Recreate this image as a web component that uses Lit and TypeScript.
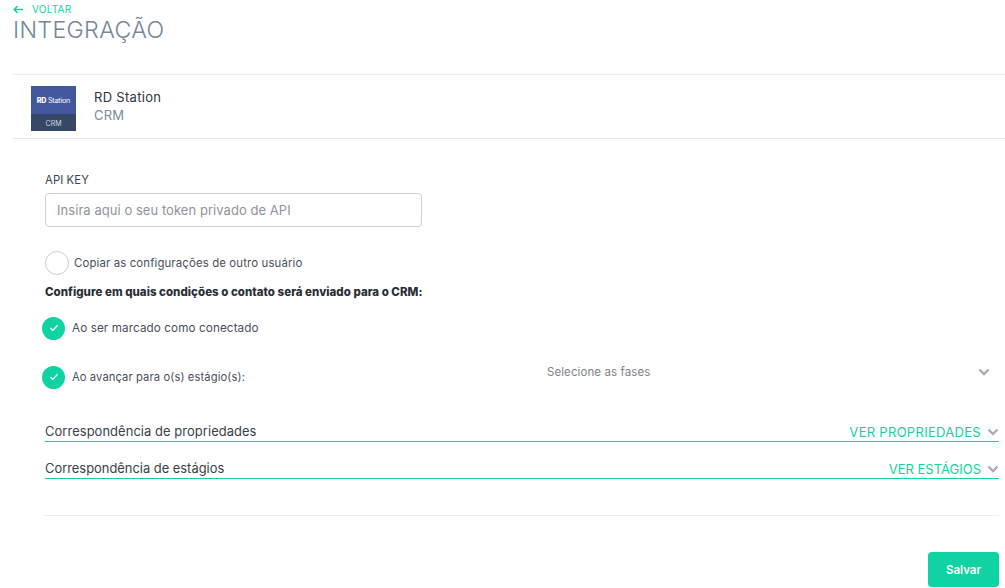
import { LitElement, html, css, svg } from "lit";
import { customElement } from "lit/decorators.js";

const chevron = svg`<svg class="chev" viewBox="0 0 12 8" width="12" height="8"><path d="M1.5 1.5 6 6l4.5-4.5" fill="none" stroke="#a9adb8" stroke-width="2.4"/></svg>`;
const check = html`<svg viewBox="0 0 12 10" width="10" height="8"><path d="M1.5 5 4.5 8 10.5 1.5" fill="none" stroke="#fff" stroke-width="1.6"/></svg>`;

@customElement("app-root")
export class AppRoot extends LitElement {
  static styles = css`
    :host { display: block; width: 1005px; height: 588px; overflow: hidden; background: #fff; font-family: Inter, "Liberation Sans", sans-serif; color: #3a3f4a; box-sizing: border-box; }
    .page { display: flex; flex-direction: column; height: 588px; padding: 4px 0 0 13px; box-sizing: border-box; }
    .back { display: flex; align-items: center; gap: 8px; height: 11px; color: #0fd3a2; font-size: 10px; line-height: 11px; letter-spacing: .25px; }
    h1 { margin: 0; height: 59px; font-size: 23.2px; font-weight: 300; line-height: 30px; color: #74879a; letter-spacing: .33px; }
    .app { display: flex; align-items: flex-start; gap: 18px; padding: 11px 0 0 18px; height: 52px; border-top: 1px solid #ececec; border-bottom: 1px solid #e6e6e6; }
    .logo { width: 45px; height: 45px; display: flex; flex-direction: column; color: #fff; flex: none; }
    .logo-top { height: 28px; background: #43589c; display: flex; align-items: center; justify-content: center; font-size: 7.2px; letter-spacing: -.2px; white-space: nowrap; }
    .logo-top b { font-weight: 800; margin-right: 1.5px; }
    .logo-bot { height: 17px; background: #364766; display: flex; align-items: center; justify-content: center; font-size: 7px; color: #d5d9e2; padding-top: 1px; box-sizing: border-box; }
    .app-text { margin-top: 2px; }
    .app-name { font-size: 13px; line-height: 18px; color: #30343c; letter-spacing: .3px; }
    .app-type { font-size: 13px; line-height: 18px; color: #7b8c9e; letter-spacing: .2px; }
    .form { display: flex; flex-direction: column; padding: 35px 6px 0 32px; flex: 1; }
    .label { font-size: 11.3px; line-height: 13px; color: #3a3f4a; letter-spacing: .1px; }
    .input { margin-top: 6px; width: 377px; height: 34px; box-sizing: border-box; border: 1px solid #cfd2d6; border-radius: 4px; padding-left: 11px; font-size: 13px; line-height: 32px; color: #8f949c; letter-spacing: .05px; }
    .copy { display: flex; align-items: center; gap: 5px; margin-top: 24px; height: 24px; font-size: 11.4px; color: #4a4f5a; letter-spacing: .13px; }
    .radio { width: 22px; height: 22px; border: 1px solid #c9cdd3; border-radius: 50%; flex: none; }
    .cond { margin-top: 11px; font-size: 11.5px; line-height: 13px; font-weight: 800; color: #2a2e36; letter-spacing: .03px; }
    .opt { display: flex; align-items: center; gap: 7px; font-size: 11.7px; color: #4a4f5a; letter-spacing: .1px; margin-left: -3px; height: 24px; }
    .opt.first { margin-top: 17px; }
    .opt.second { margin-top: 25px; font-size: 11.2px; white-space: nowrap; }
    .tick { width: 23px; height: 23px; border-radius: 50%; background: #0fd3a2; display: flex; align-items: center; justify-content: center; flex: none; }
    .select { flex: 1; display: flex; align-items: center; justify-content: space-between; padding: 0 9px 0 0; margin-left: 295px; font-size: 11.5px; color: #7d828c; margin-top: -11px; }
    .sec { display: flex; justify-content: space-between; align-items: flex-end; height: 25px; box-sizing: border-box; border-bottom: 1px solid #0fd3a2; font-size: 12.9px; line-height: 18px; color: #3a3f4a; letter-spacing: .08px; }
    .sec.one { margin-top: 28px; }
    .sec.two { margin-top: 12px; letter-spacing: 0; }
    .sec-r { display: flex; align-items: center; gap: 6px; color: #0fd3a2; font-size: 13px; letter-spacing: .3px; }
    .sec.two .sec-r { letter-spacing: 0; }
    .chev { display: block; }
    .rule { margin-top: 36px; border-top: 1px solid #ececec; }
    .foot { display: flex; justify-content: flex-end; margin-top: 36px; }
    button { width: 71px; height: 35px; border: 0; border-radius: 4px; background: #0fd3a2; color: #fff; font: 600 11.5px Inter, "Liberation Sans", sans-serif; padding: 0; }
  `;

  render() {
    return html`<div class="page">
      <div class="back">
        <svg viewBox="0 0 12 10" width="11" height="9"><path d="M11 5H1.5M5 1.2 1.2 5 5 8.8" fill="none" stroke="#0fd3a2" stroke-width="1.6"/></svg>
        <span>VOLTAR</span>
      </div>
      <h1>INTEGRAÇÃO</h1>
      <div class="app">
        <div class="logo">
          <div class="logo-top"><b>RD</b>Station</div>
          <div class="logo-bot">CRM</div>
        </div>
        <div class="app-text">
          <div class="app-name">RD Station</div>
          <div class="app-type">CRM</div>
        </div>
      </div>
      <div class="form">
        <div class="label">API KEY</div>
        <div class="input">Insira aqui o seu token privado de API</div>
        <div class="copy"><span class="radio"></span>Copiar as configurações de outro usuário</div>
        <div class="cond">Configure em quais condições o contato será enviado para o CRM:</div>
        <div class="opt first"><span class="tick">${check}</span>Ao ser marcado como conectado</div>
        <div class="opt second"><span class="tick">${check}</span>Ao avançar para o(s) estágio(s):
          <div class="select"><span>Selecione as fases</span>${chevron}</div>
        </div>
        <div class="sec one"><span>Correspondência de propriedades</span><span class="sec-r">VER PROPRIEDADES ${chevron}</span></div>
        <div class="sec two"><span>Correspondência de estágios</span><span class="sec-r">VER ESTÁGIOS ${chevron}</span></div>
        <div class="rule"></div>
        <div class="foot"><button>Salvar</button></div>
      </div>
    </div>`;
  }
}
